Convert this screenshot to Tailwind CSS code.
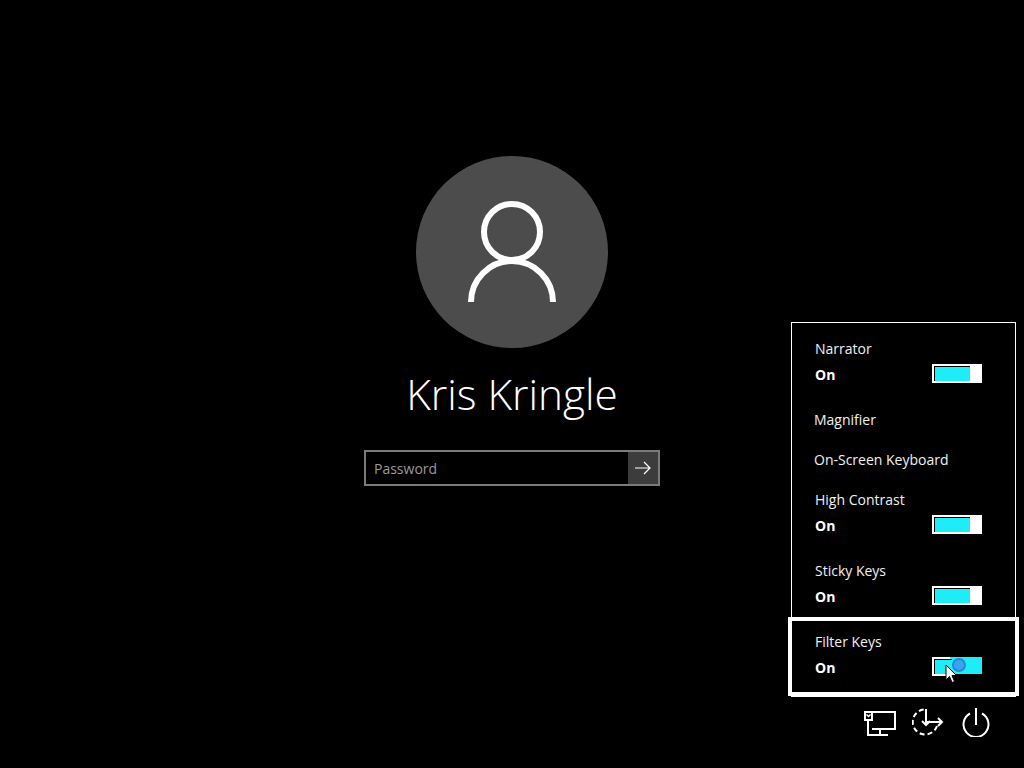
<!DOCTYPE html>
<html lang="en">
<head>
    <meta charset="UTF-8">
    <title>Sign in</title>
    <script src="https://cdn.jsdelivr.net/npm/@tailwindcss/browser@4"></script>
</head>
<body class="bg-black text-white h-[768px] w-[1024px] overflow-hidden relative font-['Open_Sans',sans-serif]">
    <!-- Sign in column -->
    <div class="flex flex-col items-center pt-[156px]">
        <div class="w-[192px] h-[192px] rounded-full bg-[#4c4c4c] flex items-center justify-center">
            <svg class="w-[192px] h-[192px]" viewBox="0 0 192 192" fill="none" stroke="#fff" stroke-width="6">
                <circle cx="96" cy="76" r="28"/>
                <path d="M55 146a41 41 0 0 1 82 0"/>
            </svg>
        </div>
        <h1 class="mt-[18px] h-[56px] text-[42.3px] leading-[56px] font-light text-white whitespace-nowrap">Kris Kringle</h1>
        <div class="mt-[28px] w-[296px] h-[36px] border-2 border-[#7a7a7a] flex items-stretch">
            <div class="flex-1 pl-[8px] text-[14px] leading-[34px] text-[#9a9a9a]">Password</div>
            <div class="w-[30px] bg-[#3c3c3c] flex items-center justify-center">
                <svg class="w-[16px] h-[14px]" viewBox="0 0 16 14" fill="none" stroke="#fff" stroke-width="1.2">
                    <path d="M0 7h15M9 1l6 6-6 6"/>
                </svg>
            </div>
        </div>
    </div>

    <!-- Ease of access flyout and footer icons -->
    <div class="absolute left-[791px] top-[322px] w-[225px]">
        <div class="h-[375px] border border-white pt-[14px] text-[14px] leading-[24px] text-[#f0f0f0]">
            <div class="h-[71px] pl-[23px] pr-[33px]">
                <div>Narrator</div>
                <div class="mt-[2px] flex items-start justify-between">
                    <span class="font-bold text-white">On</span>
                    <div class="mt-[1px] w-[50px] h-[19px] bg-white p-[2px] flex">
                        <div class="w-[36px] h-full bg-[#1eecf6] border-l border-t border-black"></div>
                    </div>
                </div>
            </div>
            <div class="h-[24px] pl-[22px]">Magnifier</div>
            <div class="h-[24px] mt-[16px] pl-[22px]">On-Screen Keyboard</div>
            <div class="h-[71px] mt-[16px] pl-[23px] pr-[33px]">
                <div>High Contrast</div>
                <div class="mt-[2px] flex items-start justify-between">
                    <span class="font-bold text-white">On</span>
                    <div class="mt-[1px] w-[50px] h-[19px] bg-white p-[2px] flex">
                        <div class="w-[36px] h-full bg-[#1eecf6] border-l border-t border-black"></div>
                    </div>
                </div>
            </div>
            <div class="h-[71px] pl-[23px] pr-[33px]">
                <div>Sticky Keys</div>
                <div class="mt-[2px] flex items-start justify-between">
                    <span class="font-bold text-white">On</span>
                    <div class="mt-[1px] w-[50px] h-[19px] bg-white p-[2px] flex">
                        <div class="w-[36px] h-full bg-[#1eecf6] border-l border-t border-black"></div>
                    </div>
                </div>
            </div>
            <div class="h-[66px] pl-[23px] pr-[33px] relative">
                <div class="absolute left-[-4px] right-[-4px] top-[-13px] h-[79px] border-4 border-white"></div>
                <div>Filter Keys</div>
                <div class="mt-[2px] flex items-start justify-between">
                    <span class="font-bold text-white">On</span>
                    <div class="mt-[1px] w-[50px] h-[19px] relative">
                        <div class="absolute left-0 top-0 w-[24px] h-[19px] bg-white"></div>
                        <div class="absolute left-[18px] top-0 w-[32px] h-[17px] bg-[#1eecf6]"></div>
                        <div class="absolute left-[2px] top-[2px] w-[18px] h-[15px] bg-[#1eecf6] border-l border-t border-black"></div>
                        <div class="absolute left-[20px] top-[1px] w-[14px] h-[14px] rounded-full bg-[#3aa5ec] border-2 border-[#2a86d8]"></div>
                        <svg class="absolute left-[13px] top-[7px] w-[12px] h-[20px]" viewBox="0 0 12 20">
                            <path d="M1 1v15l3.500-3.500 2.500 6 2.500-1-2.500-6h4.500z" fill="#fff" stroke="#000" stroke-width="1"/>
                        </svg>
                    </div>
                </div>
            </div>
        </div>
        <div class="flex justify-end items-start pt-[10px] pr-[26px]">
            <svg class="w-[34px] h-[30px]" viewBox="0 0 34 30" fill="none" stroke="#fff" stroke-width="2">
                <path d="M9 5h23v17H9M17 22v6M9 28h16M5 13v15h4"/>
                <rect x="2" y="5" width="7" height="8"/>
                <path d="M3.500 7.500l2 2 2-2" stroke-width="1.500"/>
            </svg>
            <svg class="ml-[15px] w-[32px] h-[30px]" viewBox="0 0 32 30" fill="none" stroke="#fff" stroke-width="2">
                <path d="M25 19a12.500 12.500 0 1 1-13-16.500" stroke-dasharray="5 3"/>
                <path d="M14 2v16M10 14l4 4 4-4M14 15h16M26 11l4 4-4 4"/>
            </svg>
            <svg class="ml-[18px] w-[28px] h-[30px]" viewBox="0 0 28 30" fill="none" stroke="#fff" stroke-width="2">
                <path d="M8 6.500a12.500 12.500 0 1 0 12 0M14 1v17"/>
            </svg>
        </div>
    </div>
</body>
</html>
